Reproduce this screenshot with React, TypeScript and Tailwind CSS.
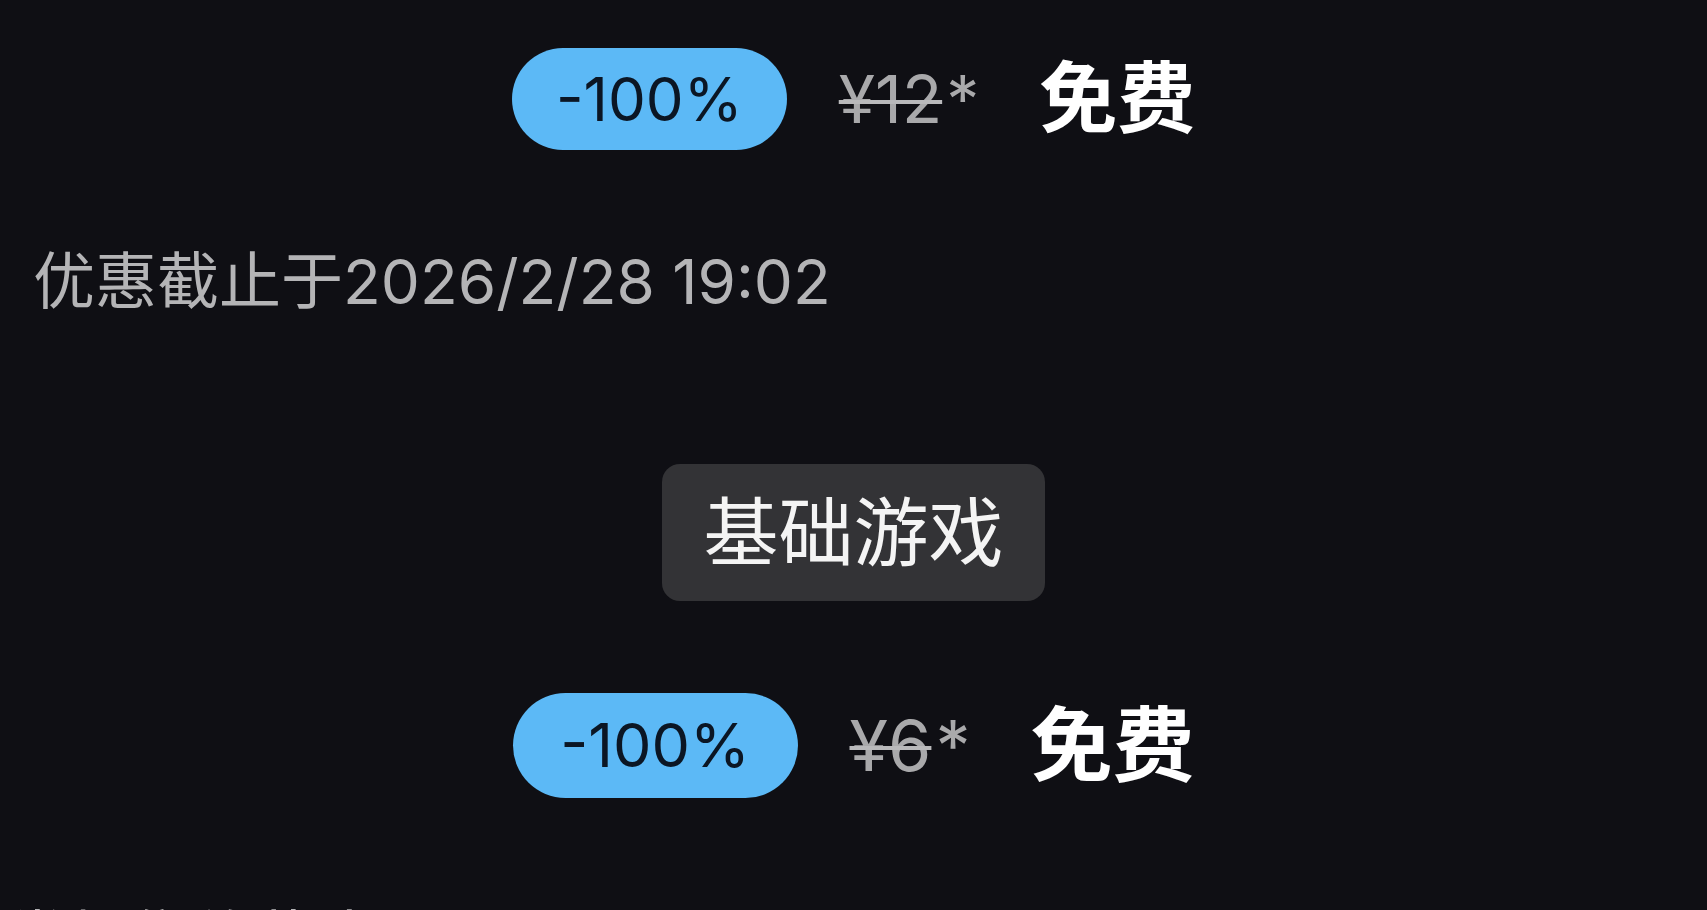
import React from "react";

const FONT = { fontFamily: '"Inter", "Noto Sans CJK SC", sans-serif' };

type Offer = { was: string; wide?: boolean };

const PriceRow = ({ was, wide }: Offer) => (
  <div className="flex items-center justify-center">
    <span
      className={
        wide
          ? "flex h-[105px] w-[285px] items-center justify-center rounded-full bg-[#5cb9f6] text-[61px] leading-none text-[#0b1624]"
          : "flex h-[102px] w-[275px] items-center justify-center rounded-full bg-[#5cb9f6] text-[60px] leading-none text-[#0b1624]"
      }
    >
      -100%
    </span>
    <span
      className={
        wide
          ? "ml-[52px] flex items-start text-[70px] leading-none text-[#a9a9ab]"
          : "ml-[52px] flex items-start text-[66px] leading-none text-[#a9a9ab]"
      }
    >
      <span className="line-through decoration-[4px] decoration-[#b9b9bb]">{was}</span>
      <span className="ml-[4px]">*</span>
    </span>
    <span
      className={
        wide
          ? "ml-[60px] text-[82px] font-bold leading-none text-white"
          : "ml-[60px] text-[78px] font-bold leading-none text-white"
      }
    >
      免费
    </span>
  </div>
);

export default function App() {
  return (
    <div className="h-[910px] w-full overflow-hidden bg-[#0f0f14] pt-[48px]" style={FONT}>
      <PriceRow was="¥12" />
      <p className="mt-[101px] pl-[33px] text-[62px] leading-none text-[#b4b4b6]">
        优惠截止于2026/2/28 19:02
      </p>

      {/* edition tag */}
      <div className="mt-[151px] flex justify-center">
        <div className="flex h-[137px] w-[383px] items-center justify-center rounded-[18px] bg-[#333336] text-[75px] leading-none text-[#f4f4f4]">
          基础游戏
        </div>
      </div>

      <div className="mt-[92px]">
        <PriceRow was="¥6" wide />
      </div>
      <p className="mt-[111px] pl-[6px] text-[62px] leading-none text-[#b4b4b6]">
        常规售价截止于2026/2/28 19:02
      </p>
    </div>
  );
}
